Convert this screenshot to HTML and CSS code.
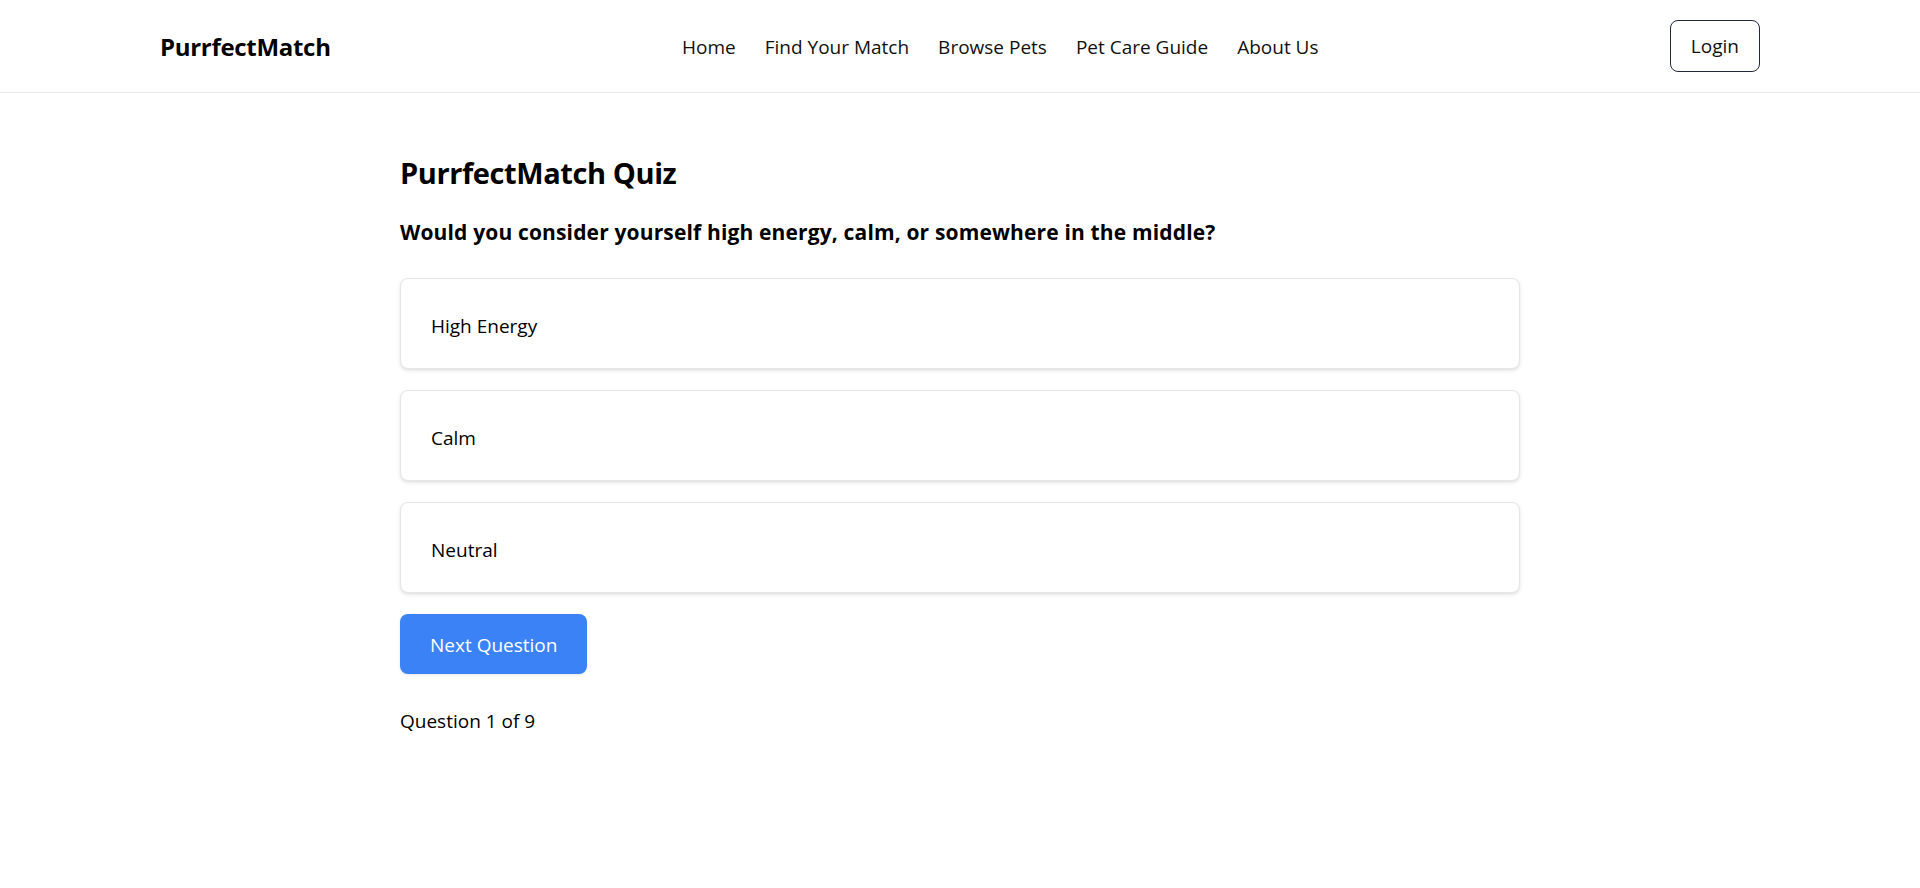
FILE: index.html
```html
<!DOCTYPE html>
<html lang="en">
<head>
<meta charset="utf-8">
<title>PurrfectMatch Quiz</title>
<link rel="stylesheet" href="styles.css">
</head>
<body>
<header class="site-header">
  <div class="header-inner">
    <div class="logo">PurrfectMatch</div>
    <nav class="main-nav">
      <a href="#">Home</a>
      <a href="#">Find Your Match</a>
      <a href="#">Browse Pets</a>
      <a href="#">Pet Care Guide</a>
      <a href="#">About Us</a>
    </nav>
    <button class="login-btn">Login</button>
  </div>
</header>
<main class="quiz">
  <h1 class="quiz-title">PurrfectMatch Quiz</h1>
  <h2 class="quiz-question">Would you consider yourself high energy, calm, or somewhere in the middle?</h2>
  <div class="options">
    <button class="option">High Energy</button>
    <button class="option">Calm</button>
    <button class="option">Neutral</button>
  </div>
  <button class="next-btn">Next Question</button>
  <p class="progress">Question 1 of 9</p>
</main>
</body>
</html>
```

FILE: styles.css
```css
* { box-sizing: border-box; }
html, body { margin: 0; padding: 0; }
body {
  font-family: "Open Sans", "Noto Sans", "Liberation Sans", sans-serif;
  color: #000;
  background: #fff;
}
.site-header {
  border-bottom: 1px solid #e5e7eb;
}
.header-inner {
  height: 92px;
  padding: 0 160px;
  display: flex;
  align-items: center;
  justify-content: space-between;
}
.logo {
  font-size: 24px;
  font-weight: 700;
  letter-spacing: -0.3px;
  margin-top: 1px;
}
.main-nav {
  display: flex;
  gap: 29px;
  margin-top: 2px;
}
.main-nav a {
  color: #111;
  text-decoration: none;
  font-size: 19px;
  line-height: 28px;
}
.login-btn {
  font-family: inherit;
  font-size: 19px;
  line-height: 28px;
  color: #111;
  background: #fff;
  border: 1px solid #1f2937;
  border-radius: 8px;
  padding: 11px 20px;
  margin-top: -1px;
}
.quiz {
  width: 1120px;
  margin: 0 auto;
  padding-top: 62px;
}
.quiz-title {
  margin: 0;
  font-size: 29px;
  line-height: 36px;
  font-weight: 700;
  letter-spacing: -0.4px;
}
.quiz-question {
  margin: 27px 0 0;
  font-size: 21px;
  line-height: 28px;
  font-weight: 700;
  letter-spacing: 0.15px;
}
.options {
  margin-top: 32px;
  display: flex;
  flex-direction: column;
  gap: 21px;
}
.option {
  font-family: inherit;
  display: flex;
  align-items: center;
  height: 91px;
  padding: 4px 30px 0;
  text-align: left;
  font-size: 19px;
  color: #000;
  background: #fff;
  border: 1px solid #e5e7eb;
  border-radius: 8px;
  box-shadow: 0 2px 4px rgba(0, 0, 0, 0.08), 0 1px 2px rgba(0, 0, 0, 0.06);
}
.next-btn {
  font-family: inherit;
  margin-top: 21px;
  height: 60px;
  padding: 2px 30px 0;
  font-size: 19px;
  color: #fff;
  background: #3b82f6;
  border: none;
  border-radius: 8px;
  box-shadow: 0 1px 3px rgba(0, 0, 0, 0.1);
}
.progress {
  margin: 32px 0 0;
  font-size: 19px;
  line-height: 30px;
}
```
